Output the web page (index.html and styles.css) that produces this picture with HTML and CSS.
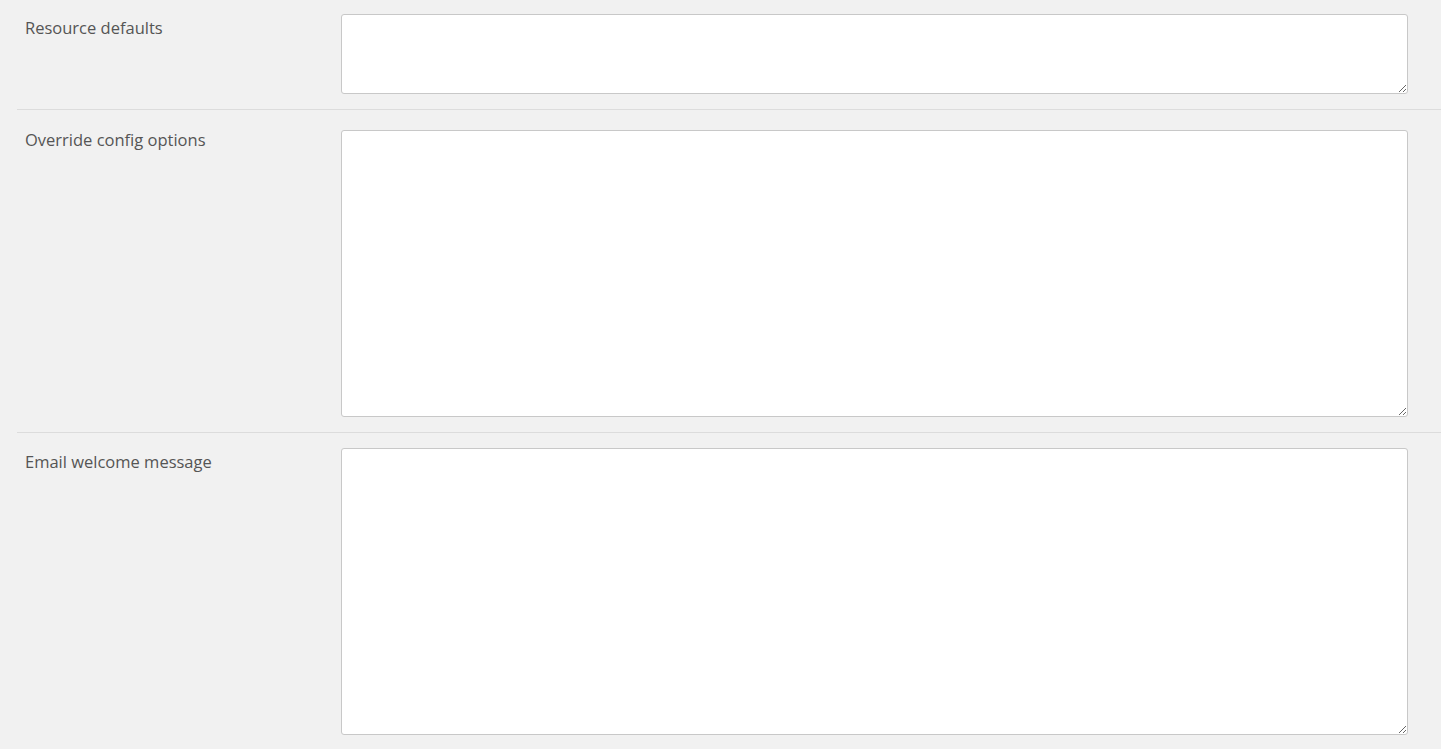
FILE: index.html
```html
<!DOCTYPE html>
<html lang="en">
<head>
    <meta charset="UTF-8">
    <meta name="viewport" content="width=device-width, initial-scale=1.0">
    <title>Settings</title>
    <link rel="stylesheet" href="styles.css">
</head>
<body>
    <form class="settings">
        <div class="field-row first">
            <label for="resourceDefaults">Resource defaults</label>
            <textarea id="resourceDefaults" class="short"></textarea>
        </div>
        <div class="field-row second">
            <label for="overrideConfig">Override config options</label>
            <textarea id="overrideConfig"></textarea>
        </div>
        <div class="field-row">
            <label for="welcomeMessage">Email welcome message</label>
            <textarea id="welcomeMessage"></textarea>
        </div>
    </form>
</body>
</html>
```

FILE: styles.css
```css
/* Global Styles */
body {
    font-family: "Open Sans", "Noto Sans", sans-serif;
    background-color: #f1f1f1;
    color: #555;
    margin: 0;
    padding: 0;
}

/* Settings rows */
.settings {
    margin-left: 17px;
}

.field-row {
    display: flex;
    align-items: flex-start;
    padding: 15px 33px 15px 8px;
    border-top: 1px solid #dcdcdc;
}

.field-row.first {
    border-top: none;
    padding-top: 14px;
}

.field-row.second {
    padding-top: 20px;
}

.field-row label {
    flex: 0 0 316px;
    font-size: 16.5px;
    line-height: 22px;
    padding-top: 3px;
}

.field-row.second label {
    padding-top: 0;
    margin-top: -1px;
}

.field-row textarea {
    flex: 1;
    height: 287px;
    margin: 0;
    padding: 6px 8px;
    box-sizing: border-box;
    border: 1px solid #c8c8c8;
    border-radius: 3px;
    background-color: #fff;
    font-family: inherit;
    font-size: 14px;
    resize: vertical;
}

.field-row textarea.short {
    height: 80px;
}
```
